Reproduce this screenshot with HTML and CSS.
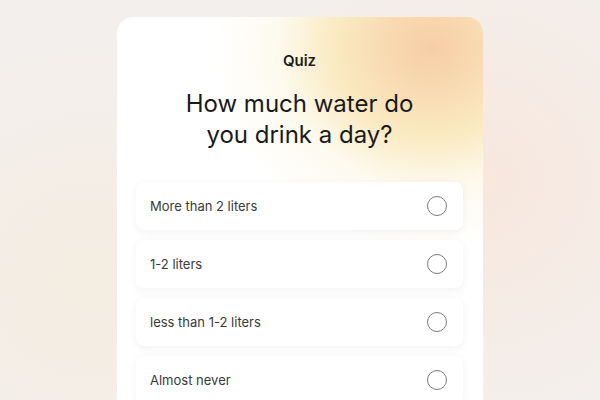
FILE: index.html
```html
<!DOCTYPE html>
<html lang="en">
<head>
    <meta charset="UTF-8">
    <meta name="viewport" content="width=device-width, initial-scale=1.0">
    <title>Quiz</title>
    <link rel="stylesheet" href="styles.css">
</head>
<body>
    <div class="card">
        <div class="title">Quiz</div>
        <h1 class="question">How much water do<br>you drink a day?</h1>

        <ul class="options">
            <li class="option"><span>More than 2 liters</span><span class="radio"></span></li>
            <li class="option"><span>1-2 liters</span><span class="radio"></span></li>
            <li class="option"><span>less than 1-2 liters</span><span class="radio"></span></li>
            <li class="option"><span>Almost never</span><span class="radio"></span></li>
        </ul>
    </div>
</body>
</html>
```

FILE: styles.css
```css
body {
    margin: 0;
    padding: 0;
    font-family: Inter, "Noto Sans", sans-serif;
    height: 400px;
    overflow: hidden;
    background-color: #f3efec;
    background-image:
        radial-gradient(circle at 80% 45%, rgba(250, 228, 215, 0.7), transparent 45%),
        radial-gradient(circle at 15% 70%, rgba(244, 236, 222, 0.8), transparent 40%);
}

.card {
    width: 366px;
    height: 383px;
    margin: 17px auto 0;
    padding: 34px 20px 0 19px;
    box-sizing: border-box;
    overflow: hidden;
    border-radius: 16px 16px 0 0;
    background-color: #ffffff;
    background-image:
        radial-gradient(ellipse 220px 200px at 86% 8%, #f6cea6 0%, #f8d9b0 20%, #faeac2 45%, rgba(252, 246, 226, 0.6) 70%, rgba(255, 255, 255, 0) 100%);
}

.title {
    text-align: center;
    font-size: 15px;
    line-height: 20px;
    font-weight: 600;
    color: #1c1c1c;
}

.question {
    margin: 17px 0 32px;
    text-align: center;
    font-size: 24px;
    line-height: 31px;
    font-weight: 400;
    color: #1a1a1a;
}

.options {
    list-style: none;
    margin: 0;
    padding: 0;
    display: flex;
    flex-direction: column;
    gap: 10px;
}

.option {
    flex-shrink: 0;
    height: 48px;
    padding: 0 16px 0 14px;
    display: flex;
    justify-content: space-between;
    align-items: center;
    background-color: #ffffff;
    border-radius: 8px;
    box-shadow: 0 2px 8px rgba(0, 0, 0, 0.06);
    font-size: 13px;
    color: #3a3a3a;
}

.radio {
    width: 18px;
    height: 18px;
    border: 1.5px solid #7c7c7c;
    border-radius: 50%;
}
```
